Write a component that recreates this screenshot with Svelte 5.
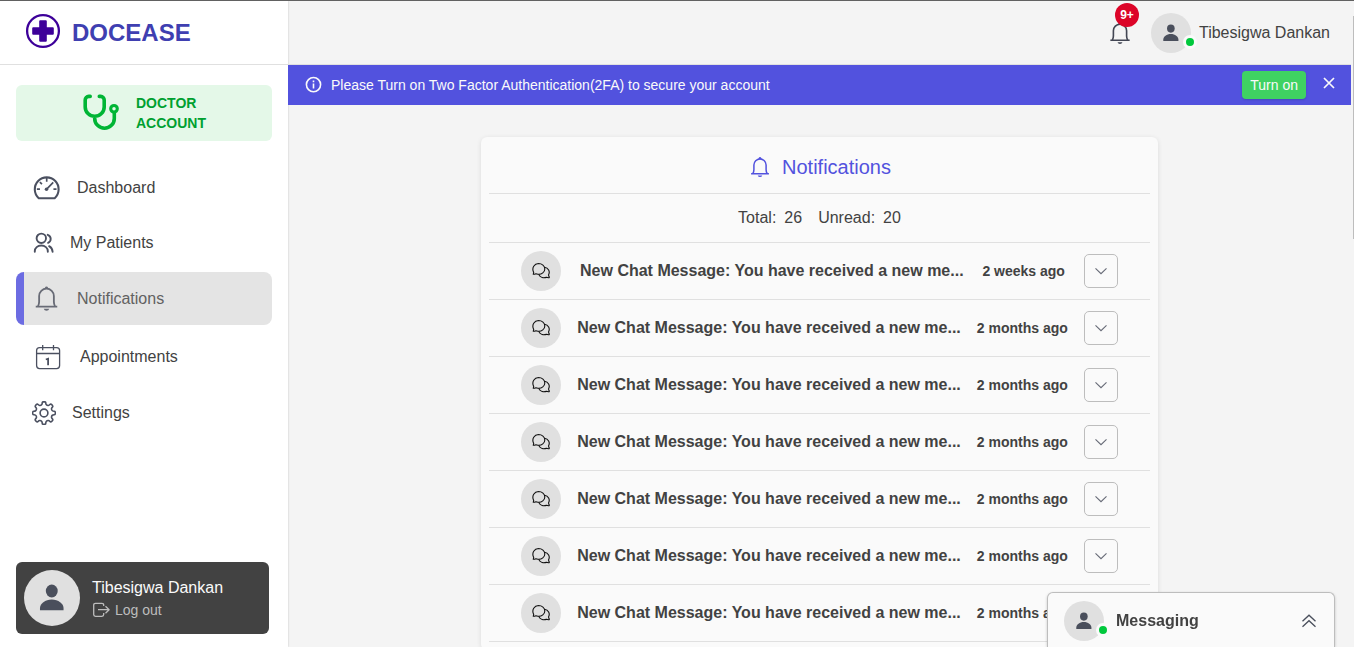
<script>
  const links = [
    { label: 'Dashboard', icon: 'dashboard' },
    { label: 'My Patients', icon: 'patients' },
    { label: 'Notifications', icon: 'bell', active: true },
    { label: 'Appointments', icon: 'calendar' },
    { label: 'Settings', icon: 'gear' }
  ];
  const times = ['2 weeks ago', ...Array(6).fill('2 months ago')];
  let showBanner = $state(true);

  const tooth = (i) => {
    const at = (r, deg) => {
      const a = ((i * 45 + deg) * Math.PI) / 180;
      return `${(12 + r * Math.sin(a)).toFixed(2)} ${(12 - r * Math.cos(a)).toFixed(2)}`;
    };
    return `${i ? 'L' : 'M'}${at(8.7, -15)}Q${at(9.2, -11)} ${at(10.3, -10)}Q${at(11.5, -9)} ${at(11.4, 0)}Q${at(11.5, 9)} ${at(10.3, 10)}Q${at(9.2, 11)} ${at(8.7, 15)}Q${at(8, 22.5)} ${at(8.7, 30)}`;
  };
  const gearPath = [0, 1, 2, 3, 4, 5, 6, 7].map(tooth).join('') + 'Z';
</script>

{#snippet bell()}
  <svg class="bell" viewBox="0 0 24 24" fill="none" stroke="currentColor" stroke-width="1.5" aria-hidden="true">
    <path d="M4.900 18.500C5.700 17.200 5.900 16.300 5.900 14.700V10a6.100 6.100 0 0 1 12.200 0v4.700c0 1.600.2 2.500 1 3.800M3.100 18.700h17.800" />
    <path d="M9.700 4.200C10.300 3.900 10.500 3.500 10.700 3a1.400 1.400 0 0 1 2.600 0c.2.500.4.900 1 1.200zM9.700 20.500h4.600a2.400 2.200 0 0 1-4.600 0z" fill="currentColor" stroke="none" />
  </svg>
{/snippet}

{#snippet person()}
  <svg class="person" viewBox="0 0 24 24" fill="currentColor" aria-hidden="true">
    <ellipse cx="11.800" cy="6" rx="5.100" ry="5.500" />
    <path d="M1.700 22.600v-2.100c0-3.700 4.500-7.300 10.100-7.300s10.100 3.600 10.100 7.300v2.100z" />
  </svg>
{/snippet}

<div class="app">
  <aside class="sidebar">
    <div class="brand">
      <svg class="logo" viewBox="0 0 36 36" aria-hidden="true">
        <circle cx="18" cy="18" r="15.9" fill="none" stroke="#3d0099" stroke-width="2.3" />
        <path d="M15.2 7.2h5.6q1 0 1 1v6.1h6q1 0 1 1v5.4q0 1-1 1h-6v6.1q0 1-1 1h-5.6q-1 0-1-1v-6.1h-6q-1 0-1-1v-5.4q0-1 1-1h6V8.2q0-1 1-1z" fill="#3d0099" />
      </svg>
      <span>DOCEASE</span>
    </div>

    <div class="account">
      <svg class="stethoscope" viewBox="0 0 40 40" fill="none" stroke="#00b535" stroke-width="3.6" stroke-linecap="round" aria-hidden="true">
        <path d="M10.200 3.400H8.700A3.500 3.500 0 0 0 5.200 6.900v7a9.500 9.300 0 0 0 19 0v-7a3.500 3.500 0 0 0-3.500-3.500h-1.400M14.700 23.500v1.900a9.800 9.800 0 0 0 19.600 0V20" />
        <circle cx="34" cy="15.800" r="3.300" stroke-width="3.100" />
      </svg>
      <span>DOCTOR<br />ACCOUNT</span>
    </div>

    <nav>
      {#each links as link}
        <a href="#{link.icon}" class:active={link.active} aria-current={link.active ? 'page' : undefined}>
          {#if link.icon === 'dashboard'}
            <svg class="dash" viewBox="0 0 28 28" fill="none" stroke="currentColor" stroke-width="1.8" aria-hidden="true">
              <path d="M6.500 24.300A11.500 11.500 0 1 1 21.900 24.300Z" stroke-width="2" stroke-linejoin="round" />
              <path d="M14.200 4.500v4M4.700 15.500h3M20.700 15.500h3M7.600 8.800l2 2M14.200 15.500l6.300-6.500" stroke-width="1.600" />
              <circle cx="14" cy="15.700" r="1.700" fill="currentColor" stroke="none" />
            </svg>
          {:else if link.icon === 'patients'}
            <svg class="patients" viewBox="0 0 22 22" fill="none" stroke="currentColor" stroke-width="1.9" stroke-linecap="round" aria-hidden="true">
              <circle cx="9.3" cy="6.300" r="4.700" />
              <path d="M2.800 19.800v-.7c0-3.200 2.800-5.600 6.500-5.600s6.500 2.400 6.500 5.600v.7M15.700 2.800c3.700 1.300 4.100 6.300.4 8M17.100 14.200c2.100 1.100 3.300 2.900 3.500 5.600" />
            </svg>
          {:else if link.icon === 'bell'}
            {@render bell()}
          {:else if link.icon === 'calendar'}
            <svg class="cal" viewBox="0 0 32 28" fill="none" stroke="currentColor" stroke-width="1.3" aria-hidden="true">
              <rect x="4.6" y="4.6" width="23" height="21" rx="3" />
              <path d="M4.600 10.500h23M10.700 2v5.200M21.500 2v5.200" />
              <path d="M13.800 16.500l2.300-.8v6.500" stroke-width="1.8" />
            </svg>
          {:else}
            <svg class="gear" viewBox="0 0 24 24" fill="none" stroke="currentColor" stroke-width="1.600" stroke-linejoin="round" aria-hidden="true">
              <path d={gearPath} />
              <circle cx="12" cy="12" r="3.9" />
            </svg>
          {/if}
          <span>{link.label}</span>
        </a>
      {/each}
    </nav>

    <div class="profile">
      <div class="avatar large">{@render person()}</div>
      <div class="who">
        <span>Tibesigwa Dankan</span>
        <button class="logout">
          <svg viewBox="0 0 18 16" fill="none" stroke="currentColor" stroke-width="1.300" stroke-linejoin="round" aria-hidden="true">
            <path d="M11.200 4V3.100q0-1.800-1.800-1.800H3Q1.200 1.300 1.200 3.100v9.500q0 1.800 1.800 1.800h6.400q1.800 0 1.800-1.800V11M5.500 7.700h11M13 4.200l3.600 3.500-3.600 3.500" />
          </svg>
          Log out
        </button>
      </div>
    </div>
  </aside>

  <div class="main">
    <header>
      <button class="bell-button" aria-label="Notifications">
        {@render bell()}
        <span class="badge">9+</span>
      </button>
      <div class="user">
        <div class="avatar">{@render person()}<i class="online"></i></div>
        <span>Tibesigwa Dankan</span>
      </div>
    </header>

    {#if showBanner}
      <div class="banner">
        <svg class="info" viewBox="0 0 18 18" fill="none" stroke="currentColor" stroke-width="1.6" aria-hidden="true">
          <circle cx="8.500" cy="8.600" r="7.100" />
          <path d="M8.500 7.500v4.900M8.500 4.500v1.700" />
        </svg>
        <p>Please Turn on Two Factor Authentication(2FA) to secure your account</p>
        <button class="turn-on">Turn on</button>
        <button class="close" aria-label="Close" onclick={() => (showBanner = false)}>
          <svg viewBox="0 0 14 14" fill="none" stroke="currentColor" stroke-width="1.700" aria-hidden="true"><path d="M2 2l10 10M12 2L2 12" /></svg>
        </button>
      </div>
    {/if}

    <section class="card">
      <h1>{@render bell()}<span>Notifications</span></h1>
      <div class="counts">
        <span>Total:</span><span>26</span>
        <span class="unread">Unread:</span><span>20</span>
      </div>
      <ul>
        {#each times as time}
          <li>
            <div class="avatar chat">
              <svg viewBox="0 0 18 18" fill="none" stroke="currentColor" stroke-width="1.100" stroke-linejoin="round" aria-hidden="true">
                <path d="M1.200 12.200c.6-.8.700-1.300.3-2.200C-.4 5.700 2.300 1.600 6.500 1.500c3.500 0 6.300 2.400 6.300 5.400 0 3.200-3.100 5.600-6.400 5.400-1.200-.1-1.800-.5-2.600-.4-.8.200-1.500.6-2.600.3z" />
                <path d="M12.500 5.200c3.900.7 5.700 4.200 4.200 7.300-.4 1-.1 1.400.6 2.500.1.500-.1.700-.6.700-1.100 0-1.500-.4-2.300-.3-3.300 1-6.500-.4-7.700-3.200" />
              </svg>
            </div>
            <p>New Chat Message: You have received a new me...</p>
            <time>{time}</time>
            <button class="expand" aria-label="Show message">
              <svg viewBox="0 0 14 14" fill="none" stroke="currentColor" stroke-width="1.100" aria-hidden="true"><path d="M1.500 4.300L7 9.700l5.500-5.400" /></svg>
            </button>
          </li>
        {/each}
      </ul>
    </section>
  </div>

  <div class="scroll-thumb"></div>

  <button class="messaging">
    <span class="avatar">{@render person()}<i class="online"></i></span>
    <span class="title">Messaging</span>
    <svg class="up" viewBox="0 0 16 16" fill="none" stroke="currentColor" stroke-width="1.300" aria-hidden="true"><path d="M1.500 8.200L8 2.200l6.500 6M1.500 13.700L8 7.700l6.500 6" /></svg>
  </button>
</div>

<style>
  :global(body) {
    background: #f4f4f4;
  }
  .app {
    display: flex;
    position: relative;
    height: 100vh;
    overflow: hidden;
    box-sizing: border-box;
    border-top: 1px solid #616161;
    font-family: 'Liberation Sans', Arial, sans-serif;
    font-size: 16px;
    line-height: 24px;
    color: #424242;
  }
  svg {
    display: block;
    flex: none;
  }
  p, h1, ul {
    margin: 0;
    padding: 0;
  }
  button {
    font: inherit;
    color: inherit;
    border: 0;
    padding: 0;
    background: none;
    cursor: pointer;
  }

  .sidebar {
    flex: none;
    width: 288px;
    display: flex;
    flex-direction: column;
    background: #fff;
    box-shadow: 0 0 2px rgba(0, 0, 0, 0.2);
  }
  .brand {
    display: flex;
    align-items: center;
    gap: 11px;
    height: 63px;
    padding-left: 25px;
    border-bottom: 1px solid #e0e0e0;
    color: #3f3fb1;
    font-size: 24px;
    font-weight: bold;
  }
  .logo {
    width: 36px;
    height: 36px;
    margin-bottom: 3px;
  }
  .account {
    display: flex;
    align-items: center;
    justify-content: center;
    gap: 16px;
    height: 56px;
    margin: 20px 16px;
    padding-right: 2px;
    border-radius: 6px;
    background: #e4f8e8;
    color: #00a030;
    font-size: 14px;
    line-height: 20px;
    font-weight: bold;
  }
  .stethoscope {
    width: 40px;
    height: 40px;
  }
  nav {
    display: flex;
    flex-direction: column;
    gap: 6px;
    padding: 0 16px;
  }
  nav a {
    display: flex;
    align-items: center;
    gap: 16px;
    padding: 12px 16px;
    border-radius: 8px;
    color: #4b5060;
    line-height: 20px;
    text-decoration: none;
  }
  nav a span {
    color: #424242;
  }
  nav a.active {
    padding-left: 8px;
    border-left: 8px solid #6c6ce2;
    background: #e4e4e4;
    color: #686b76;
  }
  nav a.active span {
    color: #616161;
  }
  .dash,
  nav .bell {
    width: 29px;
    height: 29px;
  }
  .patients {
    width: 22px;
    height: 22px;
  }
  .cal {
    width: 32px;
    height: 28px;
  }
  .gear {
    width: 24px;
    height: 24px;
  }
  .profile {
    display: flex;
    align-items: center;
    gap: 12px;
    margin: auto 19px 13px 16px;
    padding: 8px;
    border-radius: 6px;
    background: #424242;
    color: #fafafa;
  }
  .who {
    display: flex;
    flex-direction: column;
    align-items: flex-start;
  }
  .logout {
    display: flex;
    align-items: center;
    gap: 4px;
    color: #bdbdbd;
    font-size: 14px;
    line-height: 20px;
  }
  .logout svg {
    width: 19px;
    height: 16px;
  }

  .avatar {
    position: relative;
    flex: none;
    display: grid;
    place-items: center;
    width: 40px;
    height: 40px;
    border-radius: 50%;
    background: #e0e0e0;
    color: #4a4f5c;
  }
  .person {
    width: 18px;
    height: 18px;
  }
  .avatar.large {
    width: 56px;
    height: 56px;
  }
  .large .person {
    width: 28px;
    height: 28px;
  }
  .online {
    position: absolute;
    right: -6px;
    bottom: 4px;
    width: 8px;
    height: 8px;
    border: 3px solid #fafafa;
    border-radius: 50%;
    background: #00c83c;
  }

  .main {
    flex: 1;
    min-width: 0;
    margin-right: 3px;
  }
  header {
    display: flex;
    align-items: center;
    justify-content: flex-end;
    gap: 18px;
    height: 63px;
    padding-right: 21px;
    border-bottom: 1px solid #e0e0e0;
  }
  .bell-button {
    position: relative;
    color: #424653;
  }
  .bell-button .bell {
    width: 26px;
    height: 26px;
  }
  .badge {
    position: absolute;
    top: -17px;
    right: -6px;
    width: 24px;
    height: 24px;
    border-radius: 50%;
    background: #dc0428;
    color: #fff;
    font-size: 12px;
    font-weight: bold;
    line-height: 24px;
    text-align: center;
  }
  .user {
    display: flex;
    align-items: center;
    gap: 8px;
  }
  .banner {
    display: flex;
    align-items: center;
    height: 40px;
    padding: 0 15px 0 17px;
    background: #5252de;
    color: #fafafa;
    font-size: 14px;
    line-height: 20px;
  }
  .info {
    width: 18px;
    height: 18px;
  }
  .banner p {
    flex: 1;
    margin-left: 8px;
  }
  .turn-on {
    padding: 4px 8px;
    border-radius: 4px;
    background: #3fd262;
    box-shadow: 0 1px 2px rgba(0, 0, 0, 0.15);
  }
  .close {
    margin: 0 0 4px 16px;
  }
  .close svg {
    width: 14px;
    height: 14px;
  }

  .card {
    box-sizing: border-box;
    width: fit-content;
    margin: 32px auto 0;
    padding: 8px;
    border-radius: 6px;
    background: #fafafa;
    box-shadow: 0 1px 5px rgba(0, 0, 0, 0.1);
  }
  h1 {
    display: flex;
    align-items: center;
    justify-content: center;
    gap: 10px;
    height: 44px;
    padding-bottom: 4px;
    border-bottom: 1px solid #e0e0e0;
    color: #5252de;
    font-size: 20px;
    font-weight: normal;
  }
  h1 .bell {
    width: 24px;
    height: 24px;
  }
  .counts {
    display: flex;
    justify-content: center;
    gap: 8px;
    padding: 12px 0;
    border-bottom: 1px solid #e0e0e0;
  }
  .unread {
    margin-left: 8px;
  }
  ul {
    list-style: none;
  }
  li {
    display: flex;
    align-items: center;
    justify-content: space-between;
    gap: 16px;
    padding: 8px 32px;
    border-bottom: 1px solid #e0e0e0;
    font-weight: bold;
  }
  .chat {
    color: #111;
  }
  .chat svg {
    width: 18px;
    height: 18px;
  }
  time {
    font-size: 14px;
    line-height: 20px;
  }
  .expand {
    display: grid;
    place-items: center;
    box-sizing: border-box;
    width: 34px;
    height: 34px;
    border: 1px solid #bdbdbd;
    border-radius: 5px;
    color: #666a76;
  }
  .expand svg {
    width: 14px;
    height: 14px;
  }

  .scroll-thumb {
    position: absolute;
    top: 15px;
    right: 0;
    width: 1px;
    height: 223px;
    background: #bdbdbd;
  }
  .messaging {
    position: fixed;
    right: 19px;
    bottom: 0;
    display: flex;
    align-items: center;
    gap: 12px;
    box-sizing: border-box;
    width: 288px;
    padding: 8px 17px 6px 16px;
    border: 1px solid #bdbdbd;
    border-bottom: 0;
    border-radius: 6px 6px 0 0;
    background: #fafafa;
    box-shadow: 0 1px 3px rgba(0, 0, 0, 0.2);
    font-weight: bold;
  }
  .title {
    flex: 1;
    text-align: left;
  }
  .up {
    width: 16px;
    height: 16px;
    color: #4a4f5c;
  }
</style>
